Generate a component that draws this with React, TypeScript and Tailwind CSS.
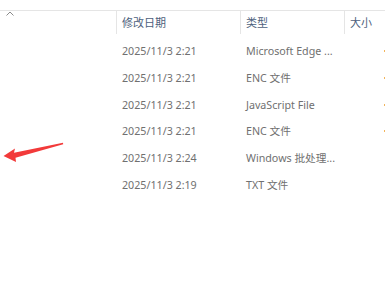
import React from "react";

const rows = [
  { date: "2025/11/3 2:21", type: "Microsoft Edge ...", dot: true },
  { date: "2025/11/3 2:21", type: "ENC 文件", dot: true },
  { date: "2025/11/3 2:21", type: "JavaScript File", dot: true },
  { date: "2025/11/3 2:21", type: "ENC 文件", dot: true },
  { date: "2025/11/3 2:24", type: "Windows 批处理...", dot: false },
  { date: "2025/11/3 2:19", type: "TXT 文件", dot: false },
];

export default function App() {
  return (
    <div
      className="relative w-[385px] h-[285px] bg-white overflow-hidden"
      style={{ fontFamily: '"Noto Sans", "Noto Sans CJK SC", sans-serif' }}
    >
      <div className="h-[10px]" />
      <div className="h-px bg-[#e5e5e5]" />
      {/* header */}
      <div className="flex h-[27px]">
        <div className="w-[116px] relative">
          <svg className="absolute left-[6px] top-[0px]" width="8" height="5" viewBox="0 0 8 5">
            <polyline points="0.5,4.5 4,1 7.5,4.5" fill="none" stroke="#8a8a8a" strokeWidth="1" />
          </svg>
        </div>
        <div className="w-[124px] flex">
          <div className="w-px h-[23px] bg-[#e5e5e5]" />
          <div className="h-[25px] flex items-center pl-[5px] text-[11px] text-[#4d5f7c]">修改日期</div>
        </div>
        <div className="w-[104px] flex">
          <div className="w-px h-[23px] bg-[#e5e5e5]" />
          <div className="h-[25px] flex items-center pl-[5px] text-[11px] text-[#4d5f7c]">类型</div>
        </div>
        <div className="flex-1 flex">
          <div className="w-px h-[23px] bg-[#e5e5e5]" />
          <div className="h-[25px] flex items-center pl-[5px] text-[11px] text-[#4d5f7c]">大小</div>
        </div>
      </div>
      {/* rows */}
      <div className="flex flex-col">
        {rows.map((r, i) => (
          <div key={i} className="flex h-[26.67px] items-center text-[10.7px] text-[#707070]">
            <div className="w-[116px]" />
            <div className="w-[124px] pl-[6px] whitespace-nowrap">{r.date}</div>
            <div className="w-[104px] pl-[6px] whitespace-nowrap">{r.type}</div>
            <div className="flex-1 flex justify-end">
              {r.dot && <span className="w-px h-[2px] bg-[#f2b45a]" />}
            </div>
          </div>
        ))}
      </div>
      {/* red arrow annotation */}
      <svg className="absolute left-0 top-[138px]" width="70" height="28" viewBox="0 138 70 28">
        <polygon
          points="3.5,156 15,148.5 14,152.8 63,142.8 63.2,144.3 15.5,157.8 16,162"
          fill="#f23a3a"
        />
      </svg>
    </div>
  );
}
